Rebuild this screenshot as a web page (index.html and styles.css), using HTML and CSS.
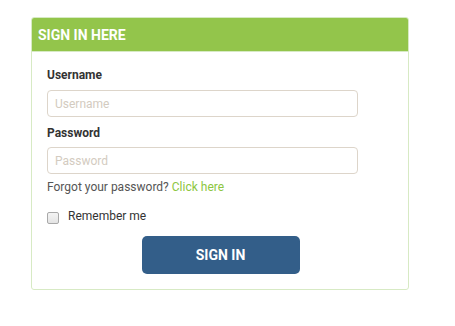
FILE: index.html
```html
<!DOCTYPE html>
<html>
<head>
<meta charset="utf-8">
<link rel="stylesheet" href="styles.css">
</head>
<body>
<div class="panel">
  <div class="panel-head">SIGN IN HERE</div>
  <form class="panel-body">
    <label class="field-label" for="u">Username</label>
    <input class="field" id="u" type="text" placeholder="Username" autofocus>
    <label class="field-label second" for="p">Password</label>
    <input class="field" id="p" type="password" placeholder="Password">
    <p class="forgot">Forgot your password? <a href="#">Click here</a></p>
    <label class="remember"><span class="check"></span><span>Remember me</span></label>
    <div class="actions"><button type="button" class="btn">SIGN IN</button></div>
  </form>
</div>
</body>
</html>
```
FILE: styles.css
```css
* { box-sizing: border-box; }
body {
  margin: 0;
  font-family: Roboto, "Liberation Sans", sans-serif;
  background: #fff;
  color: #333;
}
.panel {
  margin: 17px 0 0 31px;
  width: 378px;
  border: 1px solid #d7eac4;
  border-radius: 3px;
  overflow: hidden;
}
.panel-head {
  background: #93c54b;
  color: #fff;
  font-weight: 700;
  font-size: 14px;
  height: 34px;
  line-height: 34px;
  padding-left: 6px;
  border-bottom: 1px solid #d7eac4;
}
.panel-body {
  display: flex;
  flex-direction: column;
  align-items: flex-start;
  padding: 15px 14px 15px 15px;
  margin: 0;
}
.field-label {
  font-size: 12px;
  font-weight: 700;
  line-height: 17px;
  color: #333;
  margin-bottom: 6px;
}
.field-label.second { margin-top: 8px; margin-bottom: 5px; }
.field {
  width: 311px;
  height: 27px;
  border: 1px solid #ddd5ca;
  border-radius: 4px;
  padding: 0 7px;
  font-family: inherit;
  font-size: 12px;
  color: #555;
  caret-color: #333;
  outline: none;
}
.field::placeholder { color: #d3cbc0; }
.forgot {
  margin: 5px 0 0;
  font-size: 12px;
  line-height: 17px;
  color: #555;
}
.forgot a { color: #8dc63f; text-decoration: none; }
.remember {
  margin-top: 12px;
  display: flex;
  align-items: center;
  gap: 9px;
  font-size: 12px;
  line-height: 17px;
  color: #333;
}
.check {
  width: 12px;
  height: 12px;
  border: 1px solid #a9a9a9;
  border-radius: 2px;
  background: linear-gradient(#f4f4f4, #e4e4e4);
  margin-top: 3px;
}
.actions {
  align-self: stretch;
  display: flex;
  justify-content: center;
  margin-top: 11px;
}
.btn {
  width: 158px;
  height: 38px;
  border: 0;
  border-radius: 5px;
  background: #335e89;
  color: #fff;
  font-family: inherit;
  font-weight: 700;
  font-size: 14px;
}
```
